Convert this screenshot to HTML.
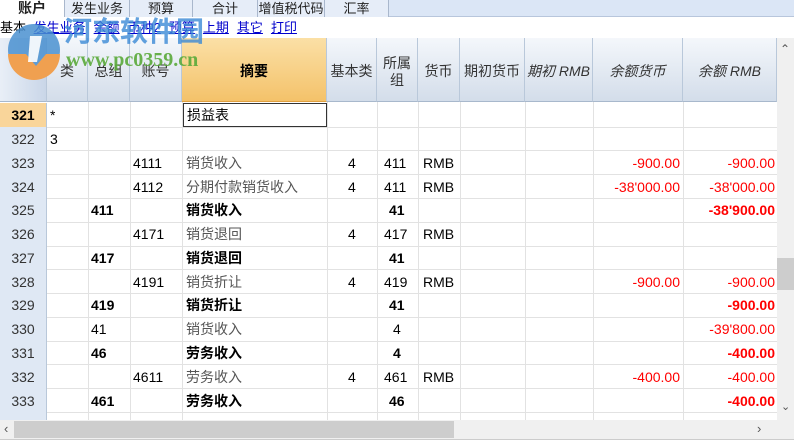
<!DOCTYPE html>
<html><head><meta charset="utf-8"><style>
*{margin:0;padding:0;box-sizing:border-box}
body{width:794px;height:448px;overflow:hidden;background:#fff;font-family:"Liberation Sans","Noto Sans CJK SC",sans-serif;font-size:14px;position:relative;color:#000}
.abs{position:absolute}
.tabs{left:0;top:0;width:794px;height:17px;background:#dbe6f6;border-bottom:1px solid #b8c6dc}
.tab{position:absolute;top:0;height:17px;border-right:1px solid #a9b7cc;background:#e6edf8;text-align:center;font-size:13px;line-height:17px;color:#222}
.links{left:0;top:18px;height:20px;font-size:13px;line-height:20px}
.links a{color:#00c;text-decoration:underline;margin-right:8px}
.hdr{top:38px;height:64px;background:linear-gradient(#f4f7fb,#d3ddea);border-right:1px solid #b9c8da;border-bottom:1px solid #a8b8cc;text-align:center;display:flex;align-items:center;justify-content:center;color:#333;font-size:14px;line-height:17px;padding-top:4px}
.cell{position:absolute;height:24px;line-height:24px;white-space:nowrap;overflow:hidden}
.vl{position:absolute;top:102px;height:318px;width:1px;background:#e2e2e2}
.hl{position:absolute;left:47px;width:730px;height:1px;background:#e2e2e2}
.rn{position:absolute;left:0;width:47px;height:24px;background:#dfe8f4;color:#333;text-align:center;line-height:24px;border-right:1px solid #b9c8da}
.r{text-align:right;color:#f00}
.b{font-weight:bold}
.g{color:#555}
</style></head><body>
<div class="abs tabs">
<div class="tab" style="left:0;width:65px;background:#fff;font-weight:bold;font-size:14px">账户</div>
<div class="tab" style="left:65px;width:65px">发生业务</div>
<div class="tab" style="left:130px;width:63px">预算</div>
<div class="tab" style="left:193px;width:65px">合计</div>
<div class="tab" style="left:258px;width:67px">增值税代码</div>
<div class="tab" style="left:325px;width:64px">汇率</div>
</div>
<div class="abs links">基本 <a style="margin-left:4px">发生业务</a><a>余额</a><a>币种2</a><a>预算</a><a>上期</a><a>其它</a><a>打印</a></div>

<div class="abs hdr" style="left:0;width:47px;background:linear-gradient(90deg,#e9eff7,#c9d6e8)"></div>
<div class="abs hdr" style="left:47px;width:41px">类</div>
<div class="abs hdr" style="left:88px;width:42px">总组</div>
<div class="abs hdr" style="left:130px;width:52px">账号</div>
<div class="abs hdr" style="left:182px;width:145px;background:linear-gradient(#fbe0a6,#f4c26a);font-weight:bold;color:#000;border-bottom-color:#e0a040">摘要</div>
<div class="abs hdr" style="left:327px;width:50px">基本类</div>
<div class="abs hdr" style="left:377px;width:41px">所属<br>组</div>
<div class="abs hdr" style="left:418px;width:42px">货币</div>
<div class="abs hdr" style="left:460px;width:65px">期初货币</div>
<div class="abs hdr" style="left:525px;width:68px;font-style:italic">期初 RMB</div>
<div class="abs hdr" style="left:593px;width:90px;font-style:italic">余额货币</div>
<div class="abs hdr" style="left:683px;width:94px;font-style:italic">余额 RMB</div>

<svg class="abs" style="left:6px;top:22px" width="60" height="58"><circle cx="28" cy="28" r="26" fill="#4a90d0" opacity=".85"/><path d="M2 32 A26 26 0 0 0 54 32 L40 32 L30 44 L20 32Z" fill="#f0a050"/><path d="M24 14 L36 14 L31 40 L22 40Z" fill="#fff" opacity=".9"/></svg>
<div class="abs" style="left:64px;top:12px;font-size:28px;font-weight:bold;color:#3b8ad6;opacity:.8;font-family:'Noto Sans CJK SC',sans-serif;line-height:36px">河东软件园</div>
<div class="abs" style="left:66px;top:49px;font-size:20px;font-weight:bold;color:#5aaa3a;font-family:'Liberation Serif',serif;opacity:.9">www.pc0359.cn</div>

<div class="vl" style="left:88px"></div><div class="vl" style="left:130px"></div><div class="vl" style="left:182px"></div><div class="vl" style="left:327px"></div><div class="vl" style="left:377px"></div><div class="vl" style="left:418px"></div><div class="vl" style="left:460px"></div><div class="vl" style="left:525px"></div><div class="vl" style="left:593px"></div><div class="vl" style="left:683px"></div>

<div class="rn" style="top:103px;background:#f9d59a;font-weight:bold;color:#000">321</div>
<div class="rn" style="top:127px">322</div>
<div class="rn" style="top:151px">323</div>
<div class="rn" style="top:175px">324</div>
<div class="rn" style="top:198px">325</div>
<div class="rn" style="top:222px">326</div>
<div class="rn" style="top:246px">327</div>
<div class="rn" style="top:270px">328</div>
<div class="rn" style="top:293px">329</div>
<div class="rn" style="top:317px">330</div>
<div class="rn" style="top:341px">331</div>
<div class="rn" style="top:365px">332</div>
<div class="rn" style="top:389px">333</div>
<div class="rn" style="top:413px;height:7px"></div>

<div class="hl" style="top:127px"></div><div class="hl" style="top:150px"></div><div class="hl" style="top:174px"></div><div class="hl" style="top:198px"></div><div class="hl" style="top:222px"></div><div class="hl" style="top:246px"></div><div class="hl" style="top:269px"></div><div class="hl" style="top:293px"></div><div class="hl" style="top:317px"></div><div class="hl" style="top:341px"></div><div class="hl" style="top:364px"></div><div class="hl" style="top:388px"></div><div class="hl" style="top:412px"></div>

<div class="cell" style="left:50px;top:103px">*</div>
<div class="abs" style="left:183px;top:103px;width:144px;height:24px;border:1px solid #333;background:#fff;line-height:22px;padding-left:3px">损益表</div>
<div class="cell" style="left:50px;top:127px">3</div>

<div class="cell" style="left:133px;top:151px">4111</div><div class="cell g" style="left:186px;top:151px">销货收入</div><div class="cell" style="left:348px;top:151px">4</div><div class="cell" style="left:384px;top:151px">411</div><div class="cell" style="left:423px;top:151px">RMB</div><div class="cell r" style="left:593px;width:87px;top:151px">-900.00</div><div class="cell r" style="left:683px;width:92px;top:151px">-900.00</div>

<div class="cell" style="left:133px;top:175px">4112</div><div class="cell g" style="left:186px;top:175px">分期付款销货收入</div><div class="cell" style="left:348px;top:175px">4</div><div class="cell" style="left:384px;top:175px">411</div><div class="cell" style="left:423px;top:175px">RMB</div><div class="cell r" style="left:593px;width:87px;top:175px">-38'000.00</div><div class="cell r" style="left:683px;width:92px;top:175px">-38'000.00</div>

<div class="cell b" style="left:91px;top:198px">411</div><div class="cell b" style="left:186px;top:198px">销货收入</div><div class="cell b" style="left:389px;top:198px">41</div><div class="cell r b" style="left:683px;width:92px;top:198px">-38'900.00</div>

<div class="cell" style="left:133px;top:222px">4171</div><div class="cell g" style="left:186px;top:222px">销货退回</div><div class="cell" style="left:348px;top:222px">4</div><div class="cell" style="left:384px;top:222px">417</div><div class="cell" style="left:423px;top:222px">RMB</div>

<div class="cell b" style="left:91px;top:246px">417</div><div class="cell b" style="left:186px;top:246px">销货退回</div><div class="cell b" style="left:389px;top:246px">41</div>

<div class="cell" style="left:133px;top:270px">4191</div><div class="cell g" style="left:186px;top:270px">销货折让</div><div class="cell" style="left:348px;top:270px">4</div><div class="cell" style="left:384px;top:270px">419</div><div class="cell" style="left:423px;top:270px">RMB</div><div class="cell r" style="left:593px;width:87px;top:270px">-900.00</div><div class="cell r" style="left:683px;width:92px;top:270px">-900.00</div>

<div class="cell b" style="left:91px;top:293px">419</div><div class="cell b" style="left:186px;top:293px">销货折让</div><div class="cell b" style="left:389px;top:293px">41</div><div class="cell r b" style="left:683px;width:92px;top:293px">-900.00</div>

<div class="cell" style="left:91px;top:317px">41</div><div class="cell g" style="left:186px;top:317px">销货收入</div><div class="cell" style="left:393px;top:317px">4</div><div class="cell r" style="left:683px;width:92px;top:317px">-39'800.00</div>

<div class="cell b" style="left:91px;top:341px">46</div><div class="cell b" style="left:186px;top:341px">劳务收入</div><div class="cell b" style="left:393px;top:341px">4</div><div class="cell r b" style="left:683px;width:92px;top:341px">-400.00</div>

<div class="cell" style="left:133px;top:365px">4611</div><div class="cell g" style="left:186px;top:365px">劳务收入</div><div class="cell" style="left:348px;top:365px">4</div><div class="cell" style="left:384px;top:365px">461</div><div class="cell" style="left:423px;top:365px">RMB</div><div class="cell r" style="left:593px;width:87px;top:365px">-400.00</div><div class="cell r" style="left:683px;width:92px;top:365px">-400.00</div>

<div class="cell b" style="left:91px;top:389px">461</div><div class="cell b" style="left:186px;top:389px">劳务收入</div><div class="cell b" style="left:389px;top:389px">46</div><div class="cell r b" style="left:683px;width:92px;top:389px">-400.00</div>

<div class="abs" style="left:777px;top:38px;width:17px;height:382px;background:#f0f0f0"></div>
<div class="abs" style="left:780px;top:42px;font-size:12px;color:#555">&#8963;</div>
<div class="abs" style="left:777px;top:258px;width:17px;height:32px;background:#cdcdcd"></div>
<div class="abs" style="left:781px;top:400px;font-size:11px;color:#555">&#8964;</div>
<div class="abs" style="left:0;top:420px;width:794px;height:19px;background:#f0f0f0"></div>
<div class="abs" style="left:14px;top:421px;width:440px;height:17px;background:#cdcdcd"></div>
<div class="abs" style="left:4px;top:421px;font-size:13px;color:#555">&#8249;</div>
<div class="abs" style="left:757px;top:421px;font-size:13px;color:#555">&#8250;</div>
<div class="abs" style="left:0;top:439px;width:794px;height:9px;background:#fff;border-top:1px solid #ccc"></div>
</body></html>
